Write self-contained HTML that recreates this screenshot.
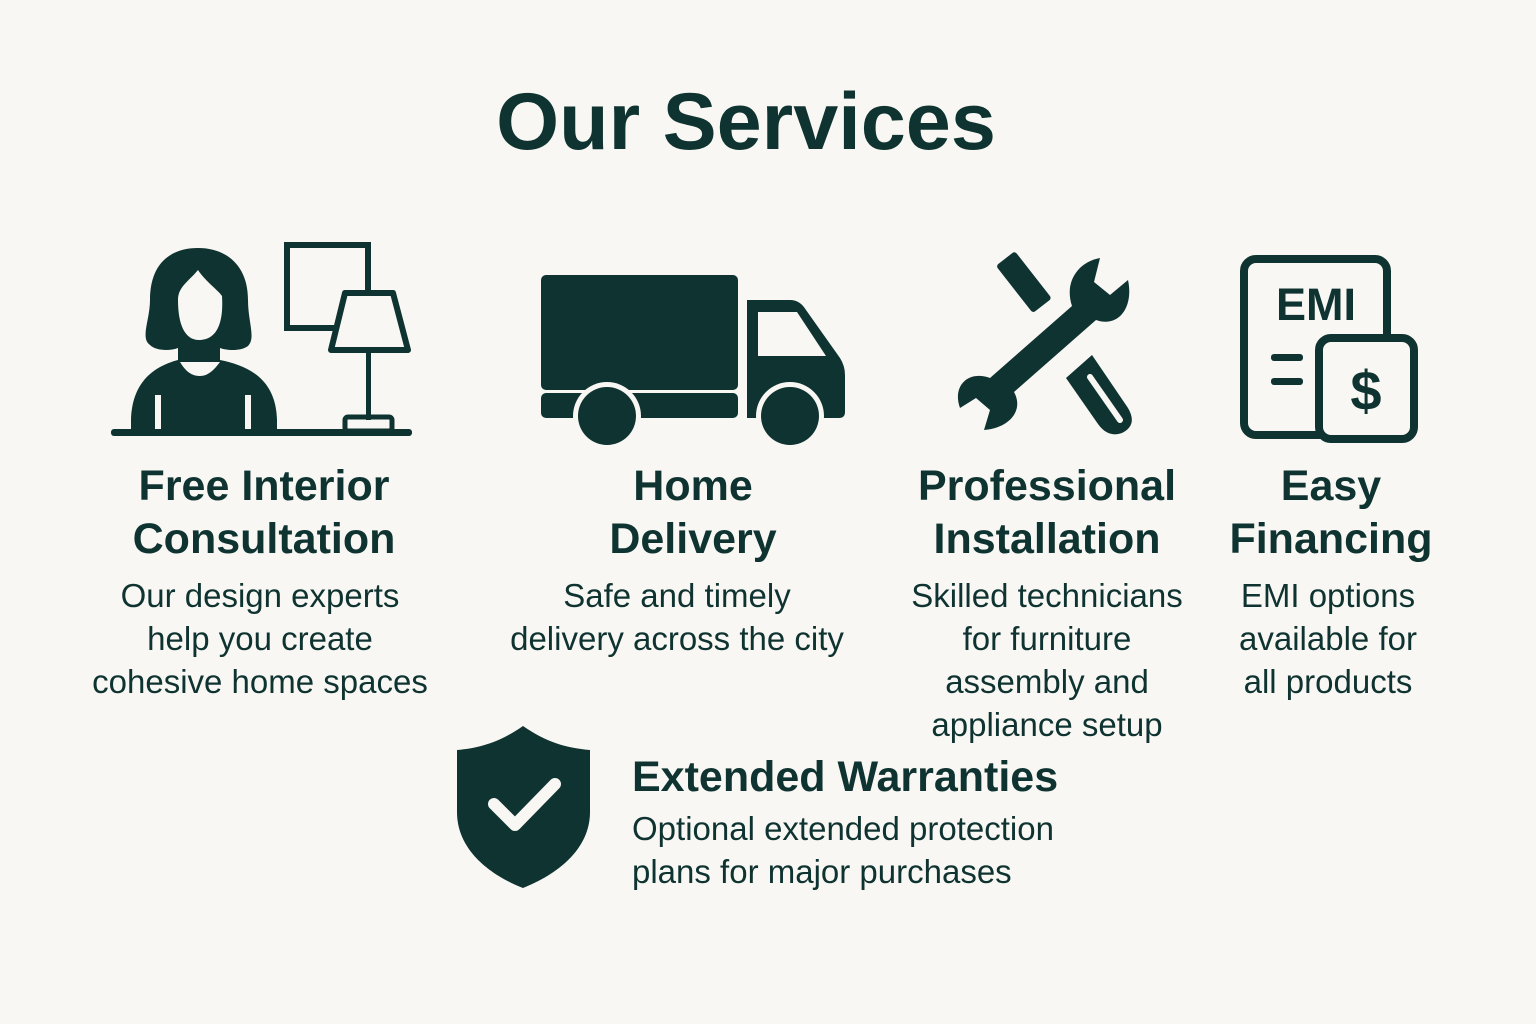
<!DOCTYPE html>
<html><head><meta charset="utf-8"><style>
body{margin:0;width:1536px;height:1024px;background:#f8f7f3;position:relative;overflow:hidden;font-family:"Liberation Sans","DejaVu Sans",sans-serif;color:#0f3330}
.a{position:absolute;white-space:nowrap}
.t{left:0;width:1492px;text-align:center;top:76px;font-size:81px;font-weight:bold}
.h{font-size:43px;font-weight:bold;line-height:53px;text-align:center;transform:translateX(-50%)}
.b{font-size:33px;line-height:43px;text-align:center;transform:translateX(-50%)}
svg{position:absolute;left:0;top:0}
</style></head><body>
<div class="a t">Our Services</div>
<svg width="1536" height="1024" fill="#0f3330">
<path d="M150 345 C140 338 150 320 150 300 C150 262 172 248 198 248 C226 248 248 265 248 300 C248 322 256 338 248 346 C240 352 225 350 220 348 L220 360 C250 366 276 380 277 420 L277 432 L131 432 L131 420 C132 380 156 366 178 360 L178 348 C170 351 156 351 150 345Z"/>
<path d="M178 300 C178 287 188 282 198 270 C206 282 218 290 222 296 C224 328 214 340 199 340 C185 340 178 325 178 300Z" fill="#f8f7f3"/>
<path d="M180 362 C186 372 192 376 200 376 C208 376 214 370 220 362Z" fill="#f8f7f3"/>
<rect x="155" y="395" width="6" height="37" fill="#f8f7f3"/><rect x="245" y="395" width="6" height="37" fill="#f8f7f3"/>
<rect x="111" y="429" width="301" height="7" rx="3"/>
<rect x="287" y="245" width="81" height="83" fill="none" stroke="#0f3330" stroke-width="6"/>
<path d="M345 293 L393 293 L408 350 L331 350Z" fill="#f8f7f3" stroke="#0f3330" stroke-width="6" stroke-linejoin="round"/>
<rect x="366" y="350" width="5" height="70"/>
<rect x="345" y="417" width="47" height="14" rx="3" fill="none" stroke="#0f3330" stroke-width="5"/>
<rect x="541" y="275" width="197" height="115" rx="5"/>
<rect x="541" y="393" width="197" height="25" rx="5"/>
<path d="M747 300 L790 300 Q800 300 806 310 L840 358 Q845 366 845 375 L845 412 Q845 418 839 418 L747 418Z"/>
<path d="M758 312 L797 312 L826 356 L758 356Z" fill="#f8f7f3"/>
<circle cx="607" cy="416" r="34" fill="#f8f7f3"/><circle cx="607" cy="416" r="29"/>
<circle cx="790" cy="416" r="34" fill="#f8f7f3"/><circle cx="790" cy="416" r="29"/>
<g transform="rotate(-38 1030 290)"><rect x="1018" y="250" width="24" height="60" rx="3"/></g>
<path d="M1092 355 L1128 408 Q1138 425 1122 433 Q1108 438 1098 424 L1066 378Z"/>
<path d="M1090 377 L1120 420" stroke="#f8f7f3" stroke-width="6" stroke-linecap="round"/>
<path d="M1100 258 C1078 262 1064 282 1072 306 L990 378 C968 370 952 386 960 408 L976 398 L990 410 L984 430 C1010 428 1024 410 1014 392 L1096 320 C1118 328 1134 308 1128 280 L1110 295 L1094 282Z"/>
<rect x="1244" y="259" width="143" height="176" rx="12" fill="none" stroke="#0f3330" stroke-width="8"/>
<text x="1316" y="320" font-size="45" font-weight="bold" text-anchor="middle" font-family="Liberation Sans,sans-serif">EMI</text>
<rect x="1271" y="354" width="32" height="7" rx="3"/><rect x="1271" y="378" width="32" height="7" rx="3"/>
<rect x="1319" y="338" width="95" height="101" rx="12" fill="#f8f7f3" stroke="#0f3330" stroke-width="8"/>
<text x="1366" y="410" font-size="56" font-weight="bold" text-anchor="middle" font-family="Liberation Sans,sans-serif">$</text>
<path d="M523 726 C500 742 480 748 457 750 L457 812 C457 850 490 875 523 888 C556 875 590 850 590 812 L590 750 C566 748 546 742 523 726Z"/>
<path d="M494 804 L515 825 L555 784" fill="none" stroke="#f8f7f3" stroke-width="12" stroke-linecap="round" stroke-linejoin="round"/>
</svg>
<div class="a h" style="left:264px;top:460px">Free Interior<br>Consultation</div>
<div class="a b" style="left:260px;top:574px">Our design experts<br>help you create<br>cohesive home spaces</div>
<div class="a h" style="left:693px;top:460px">Home<br>Delivery</div>
<div class="a b" style="left:677px;top:574px">Safe and timely<br>delivery across the city</div>
<div class="a h" style="left:1047px;top:460px">Professional<br>Installation</div>
<div class="a b" style="left:1047px;top:574px">Skilled technicians<br>for furniture<br>assembly and<br>appliance setup</div>
<div class="a h" style="left:1331px;top:460px">Easy<br>Financing</div>
<div class="a b" style="left:1328px;top:574px">EMI options<br>available for<br>all products</div>
<div class="a" style="left:632px;top:751px;font-size:43px;font-weight:bold;line-height:53px">Extended Warranties</div>
<div class="a" style="left:632px;top:807px;font-size:33px;line-height:43px">Optional extended protection<br>plans for major purchases</div>
</body></html>
